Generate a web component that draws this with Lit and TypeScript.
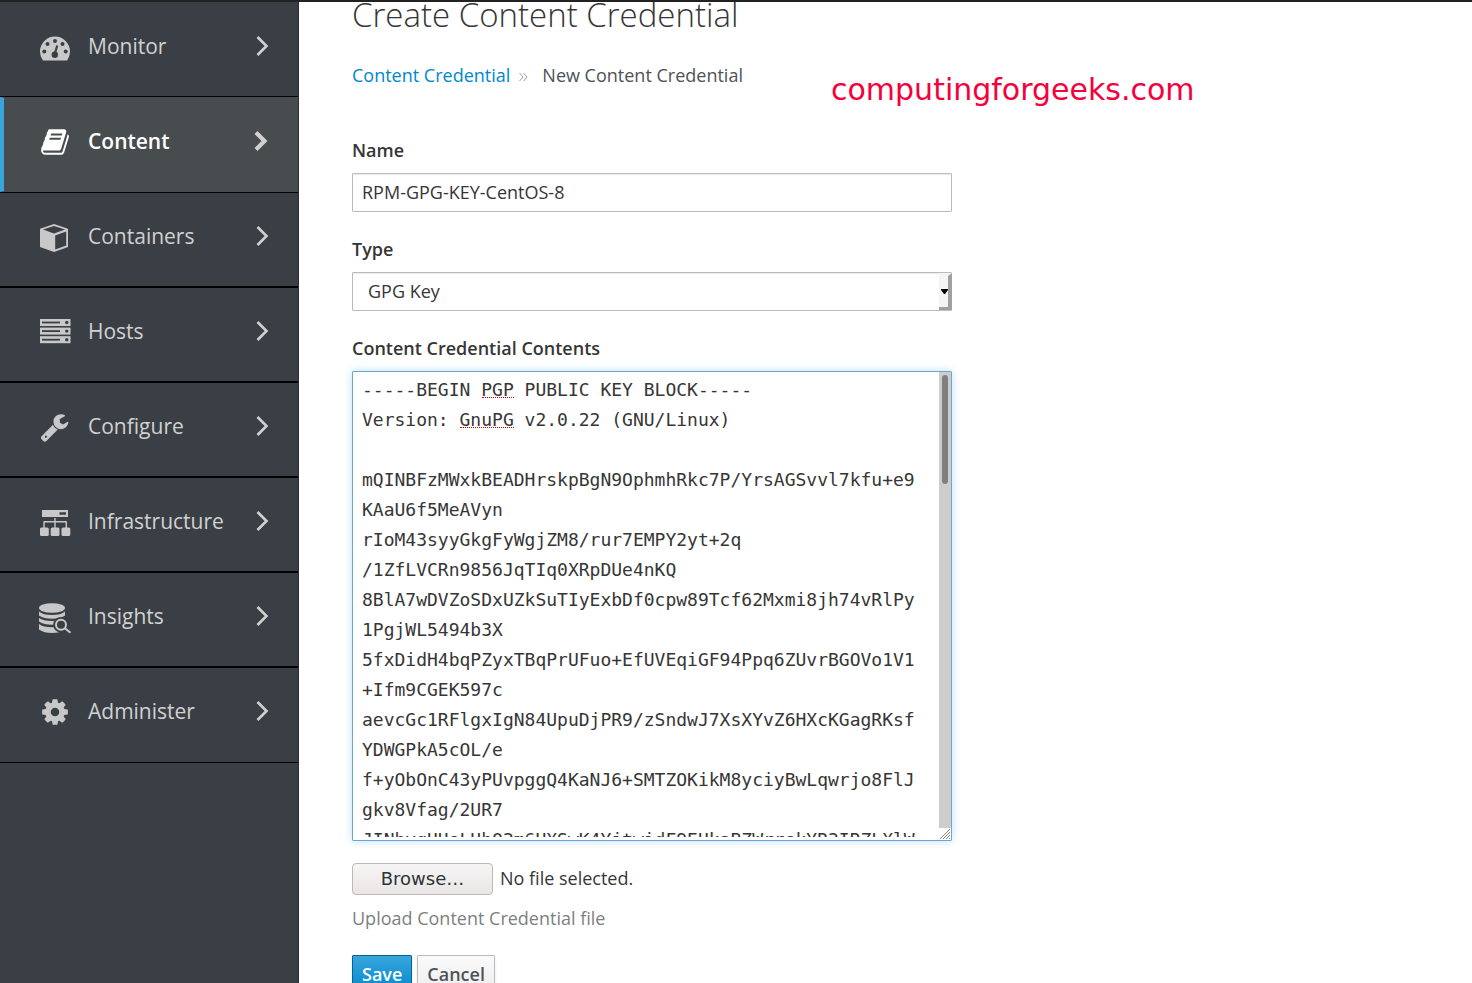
import { LitElement, html, css, svg, nothing } from "lit";
import { customElement, property } from "lit/decorators.js";
import { classMap } from "lit/directives/class-map.js";

const BOOK =
  "M1703 478q40 57 18 129l-275 906q-19 64-76.5 107.5t-122.5 43.5h-923q-77 0-148.5-53.5t-99.5-131.5q-24-67-2-127 0-4 3-27t4-37q1-8-3-21.5t-3-19.5q2-11 8-21t16.5-23.500 16.500-23.500q23-38 45-91.500t30-91.500q3-10 .5-30t-.5-28q3-11 17-28t17-23q21-36 42-92t25-90q1-9-2.500-32t.5-28q4-13 22-30.500t22-22.500q19-26 42.500-84.500t27.500-96.500q1-8-3-25.500t-2-26.500q2-8 9-18t18-23 17-21q8-12 16.500-30.500t15-35 16-36 19.500-32 26.500-23.500 36-11.500 47.500 5.500l-1 3q38-9 51-9h761q74 0 114 56t18 130l-274 906q-36 119-71.500 153.500t-128.500 34.500h-869q-27 0-38 15-11 16-1 43 24 70 144 70h923q29 0 56-15.500t35-41.500l300-987q7-22 5-57 38 15 59 43zm-1064 2q-4 13 2 22.500t20 9.500h608q13 0 25.500-9.500t16.500-22.500l21-64q4-13-2-22.500t-20-9.500h-608q-13 0-25.500 9.500t-16.500 22.500zm-83 256q-4 13 2 22.500t20 9.500h608q13 0 25.500-9.500t16.500-22.500l21-64q4-13-2-22.500t-20-9.500h-608q-13 0-25.500 9.500t-16.500 22.500z";
const WRENCH =
  "M448 1472q0-26-19-45t-45-19-45 19-19 45 19 45 45 19 45-19 19-45zm644-420l-682 682q-37 37-90 37-52 0-91-37l-106-108q-38-36-38-90 0-53 38-91l681-681q39 98 114.500 173.500t173.500 114.500zm634-435q0 39-23 106-47 134-164.500 217.500t-258.500 83.500q-185 0-316.500-131.500t-131.500-316.500 131.500-316.500 316.500-131.500q58 0 121.500 16.500t107.500 46.500q16 11 16 28t-16 28l-293 169v224l193 107q5-3 79-48.500t135.500-81 70.500-35.500q15 0 23.500 10t8.500 25z";
const COG =
  "M1152 896q0-106-75-181t-181-75-181 75-75 181 75 181 181 75 181-75 75-181zm512-109v222q0 12-8 23t-20 13l-185 28q-19 54-39 91 35 50 107 138 10 12 10 25t-9 23q-27 37-99 108t-94 71q-12 0-26-9l-138-108q-44 23-91 38-16 136-29 186-7 28-36 28h-222q-14 0-24.500-8.500t-11.500-21.500l-28-184q-49-16-90-37l-141 107q-10 9-25 9-14 0-25-11-126-114-165-168-7-10-7-23 0-12 8-23 15-21 51-66.500t54-70.500q-27-50-41-99l-183-27q-13-2-21-12.500t-8-23.500v-222q0-12 8-23t19-13l186-28q14-46 39-92-40-57-107-138-10-12-10-24 0-10 9-23 26-36 98.500-107.500t94.500-71.500q13 0 26 10l138 107q44-23 91-38 16-136 29-186 7-28 36-28h222q14 0 24.500 8.500t11.500 21.500l28 184q49 16 90 37l142-107q9-9 24-9 13 0 25 10 129 119 165 170 7 8 7 22 0 12-8 23-15 21-51 66.500t-54 70.500q26 50 41 98l183 28q13 2 21 12.500t8 23.500z";

const glyphs: Record<string, unknown> = {
  gauge: svg`
    <path d="M4.600 29A15 15 0 0 1 2 20.500a15 15 0 0 1 30 0A15 15 0 0 1 29.400 29Q29 29.500 28.300 29.500H5.700Q5 29.500 4.600 29Z"/>
    <g class="hole">
      <circle cx="6.300" cy="20.500" r="2"/><circle cx="9.500" cy="13" r="2"/><circle cx="17" cy="9.900" r="2"/>
      <circle cx="24.500" cy="13" r="2"/><circle cx="27.700" cy="20.500" r="2"/><circle cx="16.800" cy="23.700" r="3.200"/>
      <path d="M15.800 22.500L18.200 14.300 20.200 14.800 18 23Z"/>
    </g>`,
  book: svg`<path transform="translate(2 1) scale(.01674)" d=${BOOK}/>`,
  cube: svg`
    <path fill-rule="evenodd" d="M16 3L30 7.800V26L16 31 2 26V7.800ZM16 4.900L5 8.600 16 12.400 27 8.600ZM17.200 14.500V28.400L28.200 24.600V10.600Z"/>`,
  servers: svg`
    ${[3, 11.6, 20.2].map((y) => svg`
      <rect x="2" y=${y} width="30.500" height="7"/>
      <g class="hole"><rect x="4" y=${y + 2.6} width="18" height="1.800"/><circle cx="28.800" cy=${y + 3.5} r="1.700"/></g>`)}`,
  wrench: svg`<path transform="translate(1.500 1) scale(.01674)" d=${WRENCH}/>`,
  network: svg`
    <path fill-rule="evenodd" d="M4 4H30V11H4ZM21.500 6.300V8.700H28V6.300Z"/>
    <path d="M16.300 12H17.700V15H28Q29 15 29 16V22H27.600V16.400H17.700V22H16.300V16.400H6.700V22H5.300V16Q5.300 15 6.300 15H16.300Z"/>
    <rect x="2" y="21.500" width="8.800" height="8.500" rx="1.500"/><rect x="12.700" y="21.500" width="8.800" height="8.500" rx="1.500"/><rect x="23.500" y="21.500" width="8.800" height="8.500" rx="1.500"/>`,
  insights: svg`
    <ellipse cx="14" cy="7" rx="13" ry="4.800"/>
    <path d="M1 10.500Q5 14 14 14T27 10.500V14.500Q22 17.800 14 17.800T1 14.500Z"/>
    <path d="M1 17Q5 20 14 20T27 17V20.500Q22 23.800 14 23.800T1 20.500Z"/>
    <path d="M1 23Q5 26.200 14 26.200T27 23V29Q22 32 14 32T1 28.500Z"/>
    <circle class="hole" cx="23" cy="23.700" r="7.800"/><path class="hole" d="M22 30L30 35 34 33 28 24Z"/>
    <circle class="ring" cx="23" cy="23.700" r="5"/><path class="ring" d="M26.600 27L32.500 31.800"/>`,
  cog: svg`<path transform="translate(2 1) scale(.01674)" d=${COG}/>`,
};

@customElement("nav-item")
class NavItem extends LitElement {
  @property() label = "";
  @property() icon = "";
  @property({ type: Boolean }) active = false;

  static styles = css`
    :host { display: block; }
    .link {
      box-sizing: border-box;
      display: flex;
      align-items: center;
      height: 95px;
      padding: 0 27px 8px 38px;
      border-top: 1px solid var(--line-above, #030303);
      border-bottom: 1px solid var(--line-below, #030303);
      background: #3a3f45;
      color: #d1d1d1;
      font: 400 21px/30px "Open Sans", sans-serif;
      text-decoration: none;
    }
    .active {
      padding-left: 34px;
      padding-right: 28px;
      border-top-color: #474c4f;
      border-bottom-color: #474c4f;
      border-left: 4px solid #39a5dc;
      background: #474c4f;
      color: #fff;
      font-weight: 600;
    }
    .icon {
      flex: none;
      width: 34px;
      height: 34px;
      margin: 4px 16px 0 0;
      fill: #c8c8c8;
      overflow: visible;
    }
    .active .icon { fill: #fff; }
    .hole { fill: #3a3f45; }
    .ring { fill: none; stroke: #c8c8c8; stroke-width: 2; }
    .text { flex: 1; }
    .chevron {
      flex: none;
      width: 16px;
      height: 22px;
      fill: none;
      stroke: #d1d1d1;
      stroke-width: 2.6;
    }
    .active .chevron { stroke-width: 4.2; }
  `;

  render() {
    return html`
      <a class=${classMap({ link: true, active: this.active })} href="#" aria-current=${this.active ? "page" : nothing}>
        <svg class="icon" viewBox="0 0 34 34" aria-hidden="true">${glyphs[this.icon]}</svg>
        <span class="text">${this.label}</span>
        <svg class="chevron" viewBox="0 0 16 22" aria-hidden="true">
          <path d=${this.active ? "M2 2.500L10.500 11 2 19.500" : "M2.500 2L11.500 11 2.500 20"} />
        </svg>
      </a>
    `;
  }
}

const NAV = [
  { label: "Monitor", icon: "gauge" },
  { label: "Content", icon: "book", active: true },
  { label: "Containers", icon: "cube" },
  { label: "Hosts", icon: "servers" },
  { label: "Configure", icon: "wrench" },
  { label: "Infrastructure", icon: "network" },
  { label: "Insights", icon: "insights" },
  { label: "Administer", icon: "cog" },
];

const KEY_TEXT = [
  "-----BEGIN PGP PUBLIC KEY BLOCK-----",
  "Version: GnuPG v2.0.22 (GNU/Linux)",
  "",
  "mQINBFzMWxkBEADHrskpBgN9OphmhRkc7P/YrsAGSvvl7kfu+e9",
  "KAaU6f5MeAVyn",
  "rIoM43syyGkgFyWgjZM8/rur7EMPY2yt+2q",
  "/1ZfLVCRn9856JqTIq0XRpDUe4nKQ",
  "8BlA7wDVZoSDxUZkSuTIyExbDf0cpw89Tcf62Mxmi8jh74vRlPy",
  "1PgjWL5494b3X",
  "5fxDidH4bqPZyxTBqPrUFuo+EfUVEqiGF94Ppq6ZUvrBGOVo1V1",
  "+Ifm9CGEK597c",
  "aevcGc1RFlgxIgN84UpuDjPR9/zSndwJ7XsXYvZ6HXcKGagRKsf",
  "YDWGPkA5cOL/e",
  "f+yObOnC43yPUvpggQ4KaNJ6+SMTZOKikM8yciyBwLqwrjo8FlJ",
  "gkv8Vfag/2UR7",
  "JINbyqUUoLUhQ2m6HXSwK4YjtwidF9EUkaBZWrrskYR3IRZLXlW",
].join("\n");

@customElement("app-root")
class AppRoot extends LitElement {
  static styles = css`
    :host {
      display: block;
      height: 100vh;
      overflow: hidden;
      background: #fff;
      color: #363636;
      font: 400 18px/30px "Open Sans", sans-serif;
    }
    .page {
      box-sizing: border-box;
      display: flex;
      height: 100%;
      border-top: 2px solid #222;
      position: relative;
    }
    .side {
      box-sizing: border-box;
      flex: none;
      width: 299px;
      background: #3a3f45;
      border-right: 1px solid #292e34;
    }
    .nav {
      list-style: none;
      margin: 0;
      padding: 0;
      border-bottom: 1px solid #030303;
    }
    .nav li:first-child { --line-above: #3a3f45; }
    .nav li:last-child { --line-below: #3a3f45; }
    .main {
      flex: 1;
      min-width: 0;
      padding: 0 53px;
      overflow: hidden;
    }
    .title {
      margin: -8px 0 0;
      font-size: 33px;
      line-height: 42px;
      font-weight: 300;
    }
    .crumbs {
      display: flex;
      align-items: center;
      margin: 24px 0 45px;
      color: #4d5258;
    }
    .crumb-link { color: #0088ce; text-decoration: none; }
    .crumb-sep { width: 9px; height: 10px; margin: 4px 14px 0 9px; fill: none; stroke: #9c9c9c; }
    .form { max-width: 600px; }
    .label { display: block; font-weight: 600; }
    .field {
      box-sizing: border-box;
      display: block;
      width: 100%;
      height: 39px;
      margin: 8px 0 22px;
      padding: 0 9px 2px;
      border: 1px solid #bbb;
      border-radius: 1px;
      background: #fff;
      box-shadow: inset 0 1px 1px rgba(3, 3, 3, 0.075);
      color: #363636;
      font: inherit;
      outline: none;
    }
    .pick { position: relative; }
    .select { appearance: none; padding-left: 15px; }
    .pick-end {
      box-sizing: border-box;
      position: absolute;
      right: 0;
      top: 1px;
      width: 13px;
      height: 37px;
      background: #f4f4f4;
      border-right: 4px solid #a0a0a0;
      border-bottom: 3px solid #a0a0a0;
      border-top: 3px solid #f4f4f4;
      pointer-events: none;
      display: flex;
      align-items: center;
      justify-content: flex-end;
    }
    .arrow { flex: none; width: 7px; height: 5px; fill: #000; }
    .area {
      display: flex;
      position: relative;
      margin: 8px 0 22px;
      border: 1px solid #69a9cf;
      border-radius: 1px;
      box-shadow: 0 0 8px rgba(91, 177, 230, 0.4);
    }
    .text {
      box-sizing: border-box;
      flex: 1;
      min-width: 0;
      height: 462px;
      margin: 3px 0;
      padding: 0 9px;
      border: 0;
      outline: none;
      resize: none;
      overflow: hidden;
      background: transparent;
      color: #363636;
      font: 18px/30px "DejaVu Sans Mono", monospace;
      white-space: pre;
    }
    .track { flex: none; width: 12px; background: #cdcdcd; display: flex; flex-direction: column; }
    .thumb { width: 6px; height: 109px; margin: 3px 3px 0; border-radius: 3px; background: #808080; }
    .grip { width: 12px; height: 12px; margin-top: auto; background: #fff; stroke: #888; }
    .spell { position: absolute; height: 0; border-top: 1px dotted #c00; }
    .spell-one { left: 129px; top: 25px; width: 32px; }
    .spell-two { left: 107px; top: 55px; width: 54px; }
    .upload { display: flex; align-items: center; gap: 7px; position: relative; }
    .file { position: absolute; inset: 0; width: 100%; opacity: 0; }
    .browse {
      box-sizing: border-box;
      width: 141px;
      height: 32px;
      border: 1px solid #c0b8b2;
      border-radius: 4px;
      background: linear-gradient(#f6f5f5, #e9e7e6);
      color: #2e3436;
      font: 18px/29px "DejaVu Sans", sans-serif;
      text-align: center;
    }
    .chosen { padding-bottom: 2px; }
    .help { margin: 8px 0 22px; color: #7d7f80; }
    .actions { display: flex; gap: 5px; }
    .btn {
      height: 39px;
      padding: 0 9px;
      border: 1px solid #bbb;
      border-radius: 1px;
      background: linear-gradient(#fafafa, #ededed);
      box-shadow: 0 2px 3px rgba(3, 3, 3, 0.1);
      color: #4d5258;
      font: 600 18px/37px "Open Sans", sans-serif;
    }
    .primary {
      border-color: #00659c;
      background: linear-gradient(#39a5dc, #0088ce);
      color: #fff;
    }
    .mark {
      position: absolute;
      left: 831px;
      top: 70px;
      color: #f5003d;
      font: 30px/36px "DejaVu Sans", sans-serif;
    }
  `;

  render() {
    return html`
      <div class="page">
        <nav class="side">
          <ul class="nav">
            ${NAV.map((n) => html`<li><nav-item label=${n.label} icon=${n.icon} ?active=${n.active}></nav-item></li>`)}
          </ul>
        </nav>
        <main class="main">
          <h1 class="title">Create Content Credential</h1>
          <nav class="crumbs">
            <a class="crumb-link" href="#">Content Credential</a>
            <svg class="crumb-sep" viewBox="0 0 9 10" aria-hidden="true"><path d="M.5 1L4 5 .5 9M4.500 1L8 5 4.500 9" /></svg>
            <span>New Content Credential</span>
          </nav>
          <form class="form">
            <label class="label" for="name">Name</label>
            <input class="field" id="name" type="text" .value=${"RPM-GPG-KEY-CentOS-8"} />
            <label class="label" for="type">Type</label>
            <div class="pick">
              <select class="field select" id="type"><option>GPG Key</option></select>
              <span class="pick-end"><svg class="arrow" viewBox="0 0 7 5"><path d="M0 0H7V1L4 5H3L0 1Z" /></svg></span>
            </div>
            <label class="label" for="contents">Content Credential Contents</label>
            <div class="area">
              <textarea class="text" id="contents" spellcheck="false" .value=${KEY_TEXT}></textarea>
              <span class="spell spell-one"></span>
              <span class="spell spell-two"></span>
              <div class="track">
                <div class="thumb"></div>
                <svg class="grip" viewBox="0 0 12 12" aria-hidden="true"><path d="M1 11L11 1M4 11L11 4M7 11L11 7M10 11L11 10" /></svg>
              </div>
            </div>
            <label class="upload">
              <input class="file" type="file" />
              <span class="browse">Browse…</span>
              <span class="chosen">No file selected.</span>
            </label>
            <p class="help">Upload Content Credential file</p>
            <div class="actions">
              <button class="btn primary" type="button">Save</button>
              <button class="btn" type="button">Cancel</button>
            </div>
          </form>
        </main>
        <div class="mark">computingforgeeks.com</div>
      </div>
    `;
  }
}
